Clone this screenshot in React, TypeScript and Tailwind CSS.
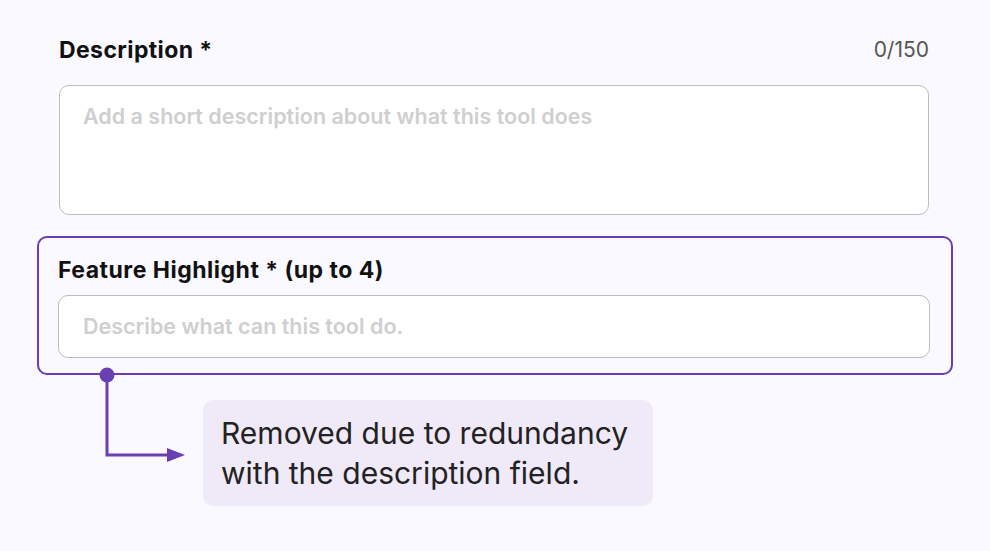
import React from 'react';

const font = { fontFamily: 'Inter, "Noto Sans", sans-serif' };

const Connector: React.FC = () => (
  <svg
    className="absolute left-[58px] top-[128px]"
    width="100"
    height="96"
    viewBox="0 0 100 96"
    fill="none"
  >
    <circle cx="10" cy="9" r="7.5" fill="#6b3fb4" />
    <path d="M10 9 V89 H72" stroke="#6b3fb4" strokeWidth="3" />
    <path d="M70 82 L88 89 L70 96 Z" fill="#6b3fb4" />
  </svg>
);

export default function App() {
  return (
    <div className="min-h-[551px] w-full bg-[#faf9ff] pt-[36px]" style={font}>
      <div className="ml-[59px] mr-[61px] flex items-center justify-between">
        <h2 className="text-[23px] font-bold leading-[28px] tracking-[0.4px] text-[#111]">Description *</h2>
        <span className="text-[21px] leading-[28px] text-[#555]">0/150</span>
      </div>

      <div className="ml-[59px] mr-[61px] mt-[21px] h-[130px] rounded-[10px] border border-[#bdbdbd] bg-white px-[23px] pt-[15px]">
        <p className="whitespace-nowrap text-[21.5px] font-semibold leading-[30px] text-[#cfcfcf]">
          Add a short description about what this tool does
        </p>
      </div>

      <div className="relative mx-[37px] mt-[21px] rounded-[10px] border-2 border-[#6a3cb5] pb-[15px] pl-[19px] pr-[21px] pt-[18px]">
        <h2 className="text-[23px] font-bold leading-[28px] tracking-[0.5px] text-[#111]">
          Feature Highlight * (up to 4)
        </h2>
        <div className="mt-[11px] flex h-[63px] items-center rounded-[10px] border border-[#bdbdbd] bg-white px-[24px]">
          <p className="whitespace-nowrap text-[21.5px] font-semibold text-[#cfcfcf]">
            Describe what can this tool do.
          </p>
        </div>
        <Connector />
      </div>

      <div className="ml-[203px] mt-[25px] w-[450px] rounded-[10px] bg-[#efe9f8] px-[18px] py-[13px]">
        <p className="whitespace-nowrap text-[30px] leading-[40px] text-[#222]">
          Removed due to redundancy
          <br />
          with the description field.
        </p>
      </div>
    </div>
  );
}
